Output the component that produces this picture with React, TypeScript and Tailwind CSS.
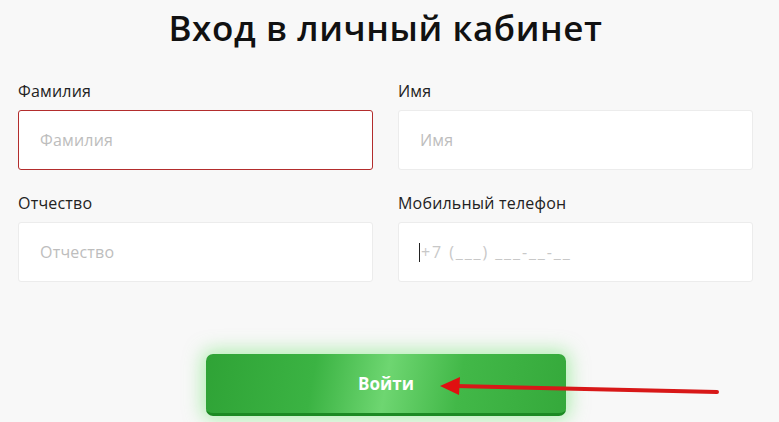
import React from "react";

function Field({ label, placeholder, error }: { label: string; placeholder: string; error?: boolean }) {
  return (
    <div className="flex flex-col">
      <div className="text-[16px] leading-[18px] text-[#222] h-[18px] mb-[10px] tracking-[0.2px]">{label}</div>
      <div
        className={
          "h-[60px] bg-white rounded-[3px] border flex items-center pl-[21px] text-[16px] text-[#bdbdbd] tracking-[0.2px] " +
          (error ? "border-[#b32d2d]" : "border-[#ececec]")
        }
      >
        {placeholder}
      </div>
    </div>
  );
}

export default function App() {
  return (
    <div
      className="w-[779px] h-[422px] bg-[#f8f8f8] overflow-hidden relative"
      style={{ fontFamily: '"Open Sans", "Noto Sans", sans-serif' }}
    >
      <h1 className="text-center text-[35px] leading-[40px] font-semibold text-[#111] pt-[8px] tracking-[0.6px] pr-[8px]">
        Вход в личный кабинет
      </h1>
      <div className="grid grid-cols-2 gap-x-[25px] gap-y-[24px] pl-[18px] pr-[26px] mt-[34px]">
        <Field label="Фамилия" placeholder="Фамилия" error />
        <Field label="Имя" placeholder="Имя" />
        <Field label="Отчество" placeholder="Отчество" />
        <div className="flex flex-col">
          <div className="text-[16px] leading-[18px] text-[#222] h-[18px] mb-[10px] tracking-[0.2px]">Мобильный телефон</div>
          <div className="h-[60px] bg-white rounded-[3px] border border-[#ececec] flex items-center pl-[20px] text-[16px] text-[#c8c8c8] tracking-[1.9px]">
            <span className="w-[1px] h-[19px] bg-[#222] mr-[1px]" />
            <span>+7 (___) ___-__-__</span>
          </div>
        </div>
      </div>
      <div className="flex justify-center mt-[72px] pr-[7px]">
        <div
          className="w-[360px] h-[62px] rounded-[7px] flex items-center justify-center text-white font-bold text-[17px] border-b-[3px] border-[#1c8a23]"
          style={{
            background:
              "linear-gradient(100deg, #2fa336 0%, #3bb343 30%, #6ed671 50%, #42b848 70%, #35a93b 100%)",
            boxShadow: "0 0 18px 4px rgba(110, 230, 110, 0.5)",
          }}
        >
          Войти
        </div>
      </div>
      <svg className="absolute left-0 top-0" width="779" height="422" viewBox="0 0 779 422">
        <line x1="455" y1="386" x2="717" y2="392" stroke="#d81818" strokeWidth="4" strokeLinecap="round" />
        <polygon points="440,386 460,377 459,395" fill="#e01010" />
      </svg>
    </div>
  );
}
